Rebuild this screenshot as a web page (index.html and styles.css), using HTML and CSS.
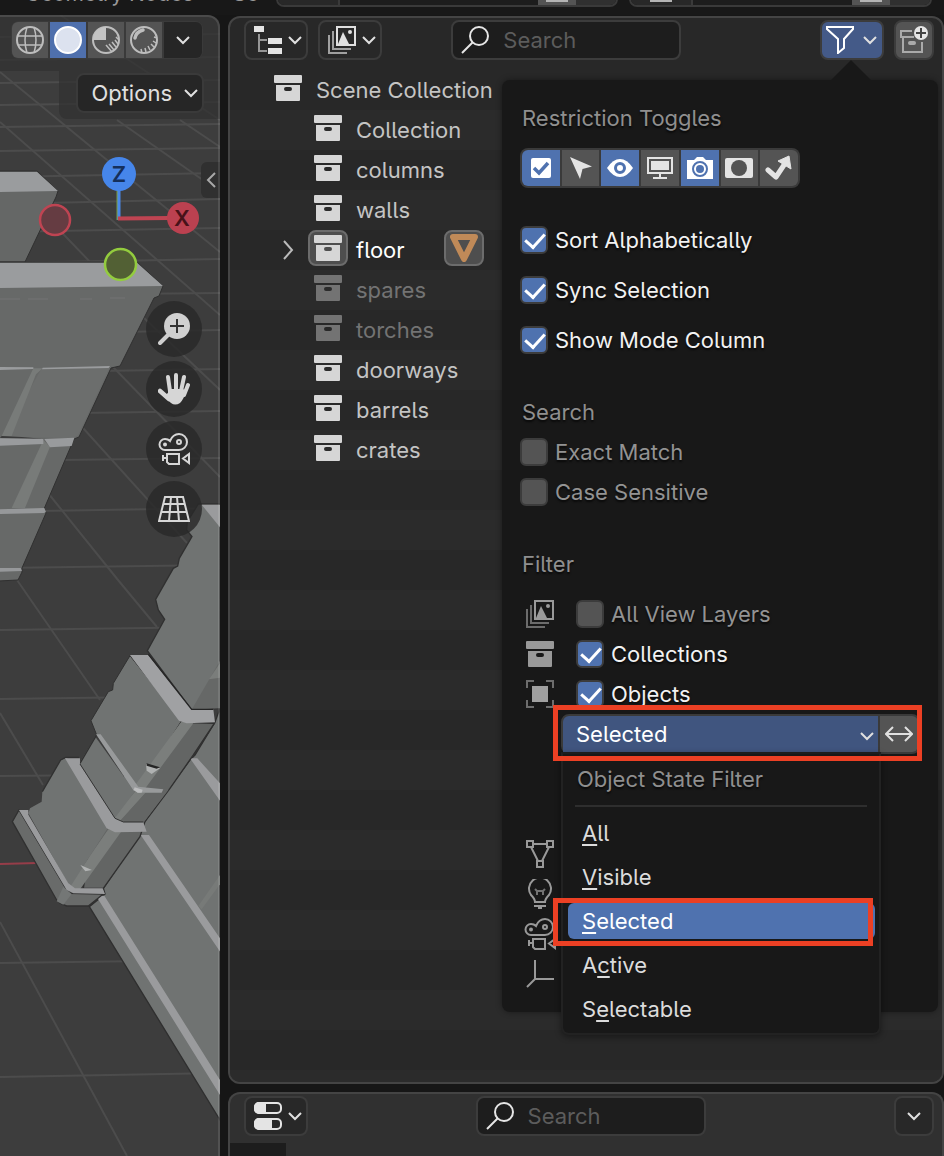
FILE: index.html
```html
<!DOCTYPE html>
<html lang="en">
<head>
<meta charset="utf-8">
<title>Outliner filter</title>
<link rel="stylesheet" href="styles.css">
</head>
<body>
<svg class="defs" aria-hidden="true">
  <symbol id="collection" viewBox="0 0 28 28">
    <path d="M1 1h26q1 0 1 1v6q0 1-1 1H1q-1 0-1-1V2q0-1 1-1zM2 11h24v15q0 1-1 1H3q-1 0-1-1zM12 13a2 2 0 0 0 0 4h4a2 2 0 0 0 0-4z" fill="currentColor" fill-rule="evenodd"/>
  </symbol>
  <symbol id="chevron" viewBox="0 0 14 10">
    <path d="M1 2l6 6 6-6" fill="none" stroke="currentColor" stroke-width="2"/>
  </symbol>
  <symbol id="search" viewBox="0 0 28 28">
    <g fill="none" stroke="currentColor" stroke-width="2"><circle cx="18" cy="10" r="9"/><path d="M11.500 16.500L1 27"/></g>
  </symbol>
  <symbol id="layers" viewBox="0 0 28 28">
    <g fill="none" stroke="currentColor"><rect x="9" y="1" width="18" height="18" stroke-width="2"/><path d="M5 5v18h18M1 9v18h18" stroke-width="2" opacity=".65"/></g>
    <path d="M10 18l5-12 6 12z" fill="currentColor"/><circle cx="22" cy="6" r="2" fill="currentColor"/>
  </symbol>
  <symbol id="camera" viewBox="0 0 32 32">
    <g fill="none" stroke="currentColor" stroke-width="2">
      <path d="M7 17a5.500 5.500 0 0 1 0-11q3 0 5 2q3-7 9-7a8 8 0 0 1 0 16z"/>
      <circle cx="7" cy="11.500" r="1"/><circle cx="21" cy="9" r="2"/>
      <path d="M9 21h12v10H11l-2-2zM9 25H5M5 22v6M31 21v9l-6-4.500z"/>
    </g>
  </symbol>
</svg>

<div class="app">
  <header class="topbar">
    <span class="tab">Geometry Nodes</span><span class="tab tab-next">Sc</span>
    <div class="id-field"><i class="id-icon"></i><i class="id-name"></i><i class="id-copy"></i><i class="id-close"></i></div>
    <div class="id-field id-second"><i class="id-icon"></i><i class="id-name"></i><i class="id-copy"></i><i class="id-close"></i></div>
  </header>

  <div class="workspace">
    <main class="viewport">
      <svg class="scene" viewBox="0 15 220 1141" preserveAspectRatio="xMinYMin slice" aria-hidden="true">
        <rect y="15" width="220" height="1141" fill="#3d3d3d"/>
        <g stroke="#4c4c4c" stroke-width="2" fill="none">
          <path d="M0 37L220 34M0 60L220 57M0 83L220 80M0 105L220 102M0 127L220 124M0 151L220 148M0 177L220 173M0 204L220 199M0 232L220 228M0 263L220 259M120 294L220 293M120 332L220 330M100 371L220 369M80 413L220 411M60 460L220 458M40 511L220 508M0 568L220 565M0 630L220 627M0 699L220 696M0 776L220 774M0 963L220 960M0 1077L220 1073"/>
          <path d="M60 15L220 120M0 72L107 160 220 252M117 120L220 192M180 120L220 147M0 122L220 315M43 213L143 317 220 390M113 367L220 477M83 428L187 543M48 493L118 580 157 627M17 580L100 700M0 713L43 785M0 922L127 1156"/>
        </g>
        <g stroke="#303030" stroke-width="1">
          <path d="M-2 171H37L58 191 56 197 25 262H-2z" fill="#656766"/>
          <path d="M-2 262H137L163 286 159 296 154 298 120 366 111 368 79 437 74 439 44 509 46 513 22 568 22 572 18 580-2 581z" fill="#676968"/>
        </g>
        <path d="M0 172H37L58 191 0 192zM0 263H137L163 286 0 288z" fill="#9a9c9e"/>
        <path d="M0 299H20M28 299H48M80 299H92M110 298H125" stroke="#7c7e7d" stroke-width=".6"/>
        <g transform="translate(0 280) scale(.3333)">
          <path d="M125 265L330 260 235 465 220 475 10 470z" fill="#6c6e6d"/>
          <path d="M100 265h28l-20 18L35 468H5z" fill="#787b79"/>
          <path d="M0 261l100 1v5L0 270zM128 263l202-5-4 6-200 4z" fill="#9a9c9e"/>
          <path d="M5 468l60 3 60 5-125-2z" fill="#3b3b3b"/>
          <path d="M130 480l20 20-75 184H35z" fill="#787b79"/>
          <path d="M0 475l130 2v15L0 497zM133 477l90-4-8 25-65 4z" fill="#999b9d"/>
          <path d="M0 688l133-4 5 12-6 3L0 702zM0 864h62l4 9-66 2z" fill="#96989a"/>
        </g>
        <g transform="translate(0 490) scale(.3333)">
          <path d="M0 1122L112 1119" stroke="#963d49" stroke-width="6"/>
          <path d="M660 655l-15 42-60 98-15 15-140 190-15 40-105 155 5 17-47 38 392 640z" fill="#707372" stroke="#2f2f2f" stroke-width="4"/>
          <path d="M570 805h22l68 75v52zM422 1035h25l213 310v40zM288 1217h25l347 553v45z" fill="#9a9b9d"/>
          <path d="M660 1155v28l-55 75-10-10z" fill="#777a78"/>
          <path d="M595 42h65v613l-85 5-133-178 52-94-19-28-8-32 53-93 13-7 5-23 38-65-16-20 2-25z" fill="#707372" stroke="#303030" stroke-width="4"/>
          <path d="M605 44h55v68z" fill="#9a9b9d"/>
          <path d="M660 512v143l-85 4z" fill="#666867"/><path d="M660 520v43l-33 5z" fill="#7a7d7b"/>
          <path d="M643 700l-63 95-70 100-75 100-15 45-110 155h-60l30-200 200-300z" fill="#636564" stroke="#303030" stroke-width="4"/>
          <path d="M390 497l155 195-130 205-10-5-115-157-17-43 52-87 13-5 2-20z" fill="#707372" stroke="#303030" stroke-width="3"/>
          <path d="M545 694l35 6-150 203-30-10zM405 905l32 3-75 85-25-10zM325 1018l38 8-125 175-33-10z" fill="#7b7e7c"/>
          <path d="M437 908h50l20-10-75 98h-75z" fill="#646665"/>
          <path d="M286 740l118 165-60 80-106-165z" fill="#707372"/>
          <path d="M180 812l20-10 125 210-115 180-125-222 5-15 35-20 2-30z" fill="#707372"/>
          <path d="M240 820l50-85M127 905l55-95 15-8h40" fill="none" stroke="#303030" stroke-width="4"/>
          <path d="M390 495h55l130 163h65l5 39-85 3-23-8z" fill="#a0a1a3"/>
          <path d="M445 493l130 165h65" fill="none" stroke="#252525" stroke-width="4"/>
          <path d="M288 733h14l113 157 75 8-5 10h-70l-14-6z" fill="#989a9b"/><path d="M404 892l24 7-3 9h-12l-12-9z" fill="#bbbcbd"/>
          <path d="M195 805h45v18l105 162 25 12h60l10 28-95 2-25-12z" fill="#9a9b9d"/>
          <path d="M240 822l105 163 25 11h60" fill="none" stroke="#333" stroke-width="3"/>
          <path d="M57 960l143 240 10 10 100 2-45 36h-65l-20-8-10-10L37 995z" fill="#696b6a" stroke="#303030" stroke-width="4"/>
          <path d="M190 1190l25 22-25 32-20-10z" fill="#747776"/>
          <path d="M57 960h28v14l120 206 20 15h83l7 17-95-2-20-10z" fill="#9a9b9d"/>
          <path d="M438 822l42 13-25 17-15-10zM241 1125l35 15-20 4z" fill="#b0b2b2"/>
          <path d="M440 820l40 12-10 4-30-9z" fill="#252525"/>
        </g>
      </svg>
      <div class="shade header-shade"></div>

      <div class="shading" role="group" aria-label="Viewport shading">
        <button aria-label="Wireframe"><svg viewBox="0 0 28 28" width="28" height="28" fill="none" stroke="#bdbdbd" stroke-width="2"><circle cx="14" cy="14" r="13"/><path d="M11 1q-4 13 0 26M18 1q4 13 0 26M1 10h26M2 19h24" stroke-width="1.500"/></svg></button>
        <button class="on" aria-label="Solid"><svg viewBox="0 0 28 28" width="28" height="28"><circle cx="14" cy="14" r="13" fill="#dce2ef" stroke="#fff" stroke-width="2"/></svg></button>
        <button aria-label="Material preview"><svg viewBox="0 0 28 28" width="28" height="28"><circle cx="14" cy="14" r="13" fill="none" stroke="#bdbdbd" stroke-width="2"/><path d="M14 14V1A13 13 0 0 0 1 14z" fill="#c4c4c4"/><path d="M14 19l6 7M17 18l5 6M20 16l4 5M23 14l3 4M24 11l3 3" stroke="#bdbdbd" stroke-width="1.500"/></svg></button>
        <button aria-label="Rendered"><svg viewBox="0 0 28 28" width="28" height="28" fill="none" stroke="#bdbdbd"><circle cx="14" cy="14" r="13" stroke-width="2"/><path d="M5 12q1-6 8-8" stroke-width="3.500" stroke-linecap="round"/><path d="M11 23l1 4M15 22l1 4M18 20l2 4M21 18l3 3M23 15l3 2M24 11l3 1" stroke-width="1.500"/></svg></button>
        <button class="drop" aria-label="Shading options"><svg width="14" height="10"><use href="#chevron"/></svg></button>
      </div>

      <button class="options">Options <svg width="14" height="10"><use href="#chevron"/></svg></button>

      <svg class="gizmo" viewBox="38 154 162 130" width="162" height="130" role="img" aria-label="View axes">
        <path d="M118 190v30" stroke="#7b9c3c" stroke-width="3"/>
        <path d="M119 190v30" stroke="#4a88e8" stroke-width="3"/>
        <path d="M118 218.500L170 218" stroke="#bf4452" stroke-width="4"/>
        <circle cx="119" cy="174" r="17" fill="#4686ea"/><circle cx="183" cy="218" r="16" fill="#bb4150"/>
        <circle cx="55" cy="220" r="15" fill="#653c42" stroke="#bf4452" stroke-width="2.500"/>
        <circle cx="120.500" cy="264.500" r="15.500" fill="#526034" stroke="#93cc3e" stroke-width="2.500"/>
        <text x="119" y="182" class="axis axis-z">Z</text><text x="182" y="226" class="axis axis-x">X</text>
      </svg>
      <button class="side-tab" aria-label="Show sidebar"><svg viewBox="0 0 12 18" width="12" height="18"><path d="M10 2L3 9l7 7" fill="none" stroke="#a8a8a8" stroke-width="2"/></svg></button>

      <div class="nav">
        <button aria-label="Zoom"><svg viewBox="0 0 32 32" width="32" height="32"><path d="M2 30L11 21" stroke="#d0d0d0" stroke-width="4" stroke-linecap="round"/><circle cx="19" cy="13" r="13" fill="#d0d0d0"/><path d="M12 13h14M19 6v14" stroke="#333" stroke-width="2"/></svg></button>
        <button aria-label="Pan"><svg viewBox="0 0 32 32" width="32" height="32"><g stroke="#d6d6d6" stroke-linecap="round" stroke-width="4" fill="none"><path d="M10 4l2 14M18 2v16M26 4l-3 14M30 12l-4 10"/><path d="M2 18l9 8" stroke-width="4.500"/></g><path d="M10 16h15l3 2q-2 8-6 12-5 3-9 0-4-3-6-8l3-2z" fill="#d6d6d6"/></svg></button>
        <button aria-label="Camera view"><svg width="32" height="32"><use href="#camera"/></svg></button>
        <button aria-label="Perspective"><svg viewBox="0 0 32 32" width="32" height="32" fill="none" stroke="#d6d6d6" stroke-width="2"><path d="M7 4h18l6 24H1zM5 11h22M3 19h26M13 4l-2 24M19 4l2 24"/></svg></button>
      </div>
    </main>

    <div class="editors">
      <section class="outliner" aria-label="Outliner">
        <div class="bar outliner-bar">
          <div class="group">
            <button class="btn pair" aria-label="Editor type"><svg viewBox="0 0 28 28" width="28" height="28"><path d="M5 8v17h8M5 14h8" fill="none" stroke="#969696" stroke-width="2"/><path d="M0 0h10v6H0zM14 12h14v6H14zM14 22h14v6H14z" fill="#e4e4e4"/></svg><svg width="14" height="10"><use href="#chevron"/></svg></button>
            <button class="btn pair" aria-label="Display mode"><svg width="28" height="28"><use href="#layers"/></svg><svg width="14" height="10"><use href="#chevron"/></svg></button>
          </div>
          <label class="search outliner-search"><svg width="28" height="28"><use href="#search"/></svg><input type="search" placeholder="Search" aria-label="Search outliner"></label>
          <div class="group right">
            <button class="btn pair filter" aria-label="Filter"><svg viewBox="0 0 28 28" width="28" height="28"><path d="M1 1h26v2l-9 10v9l-6 5V13L1 3z" fill="none" stroke="#fff" stroke-width="2"/></svg><svg width="14" height="10"><use href="#chevron"/></svg></button>
            <button class="btn new" aria-label="New collection"><svg viewBox="0 0 28 28" width="28" height="28"><path d="M12 5H1v6h13M3 11v15h19V16" fill="none" stroke="#aaa" stroke-width="2"/><rect x="8" y="15" width="8" height="4" rx="2" fill="#aaa"/><circle cx="21" cy="7" r="7" fill="#e6e6e6"/><path d="M16 7h10M21 2v10" stroke="#444" stroke-width="2"/></svg></button>
          </div>
        </div>

        <ul class="tree">
          <li class="root"><i></i><span class="ico"><svg width="28" height="28"><use href="#collection"/></svg></span><span>Scene Collection</span></li>
          <li><i></i><span class="ico"><svg width="28" height="28"><use href="#collection"/></svg></span><span>Collection</span></li>
          <li><i></i><span class="ico"><svg width="28" height="28"><use href="#collection"/></svg></span><span>columns</span></li>
          <li><i></i><span class="ico"><svg width="28" height="28"><use href="#collection"/></svg></span><span>walls</span></li>
          <li class="active"><i><svg viewBox="0 0 12 20" width="12" height="20"><path d="M2 1l8 9-8 9" fill="none" stroke="#bbb" stroke-width="2"/></svg></i><span class="ico boxed"><svg width="28" height="28"><use href="#collection"/></svg></span><span>floor</span><span class="boxed mesh"><svg viewBox="0 0 28 28" width="28" height="28"><path d="M3 3h22L14 25z" fill="none" stroke="#c08a58" stroke-width="6" stroke-linejoin="round"/></svg></span></li>
          <li class="off"><i></i><span class="ico"><svg width="28" height="28"><use href="#collection"/></svg></span><span>spares</span></li>
          <li class="off"><i></i><span class="ico"><svg width="28" height="28"><use href="#collection"/></svg></span><span>torches</span></li>
          <li><i></i><span class="ico"><svg width="28" height="28"><use href="#collection"/></svg></span><span>doorways</span></li>
          <li><i></i><span class="ico"><svg width="28" height="28"><use href="#collection"/></svg></span><span>barrels</span></li>
          <li><i></i><span class="ico"><svg width="28" height="28"><use href="#collection"/></svg></span><span>crates</span></li>
        </ul>

        <div class="popover" role="dialog" aria-label="Filter">
          <h2>Restriction Toggles</h2>
          <div class="toggles">
            <button class="on" aria-label="Exclude"><svg viewBox="0 0 28 28" width="28" height="28"><rect x="4" y="4" width="20" height="20" rx="2" fill="#fff"/><path d="M7 14l5 5L21 9" fill="none" stroke="#4f72af" stroke-width="3.500"/></svg></button>
            <button aria-label="Selectable"><svg viewBox="0 0 28 28" width="28" height="28"><path d="M3 3l22 9.500-9.500 2.500L13 25z" fill="#e4e4e4"/></svg></button>
            <button class="on" aria-label="Hide"><svg viewBox="0 0 28 28" width="28" height="28"><path d="M1 14Q7 5 14 5t13 9Q21 23 14 23T1 14z" fill="#fff"/><circle cx="14" cy="14" r="4.500" fill="none" stroke="#4f72af" stroke-width="3"/></svg></button>
            <button aria-label="Viewports"><svg viewBox="0 0 28 28" width="28" height="28"><path d="M2 4h24v15H2z" fill="none" stroke="#e4e4e4" stroke-width="2"/><path d="M5 7h18v9H5zM13 19h2v4h-2zM7 23h14v2H7z" fill="#e4e4e4"/></svg></button>
            <button class="on" aria-label="Renders"><svg viewBox="0 0 28 28" width="28" height="28"><path d="M1 6h7l3-3h6l3 3h7v19H1z" fill="#fff"/><circle cx="14" cy="15" r="7" fill="none" stroke="#4f72af" stroke-width="2"/><circle cx="14" cy="15" r="4" fill="#4f72af"/></svg></button>
            <button aria-label="Holdout"><svg viewBox="0 0 28 28" width="28" height="28"><rect y="4" width="28" height="20" rx="2" fill="#e4e4e4"/><circle cx="14" cy="14" r="8" fill="#545454"/></svg></button>
            <button aria-label="Indirect only"><svg viewBox="0 0 28 28" width="28" height="28" fill="none" stroke="#e4e4e4" stroke-width="5" stroke-linejoin="round"><path d="M3 16l8 7L21 8" stroke-linecap="round"/><path d="M13 7l11-5 2 13z" fill="#e4e4e4" stroke-width="1"/></svg></button>
          </div>
          <div class="checks spaced">
            <label><input type="checkbox" checked>Sort Alphabetically</label>
            <label><input type="checkbox" checked>Sync Selection</label>
            <label><input type="checkbox" checked>Show Mode Column</label>
          </div>
          <h2>Search</h2>
          <div class="checks">
            <label class="dim"><input type="checkbox">Exact Match</label>
            <label class="dim"><input type="checkbox">Case Sensitive</label>
          </div>
          <h2>Filter</h2>
          <div class="filters">
            <svg width="28" height="28"><use href="#layers"/></svg><label class="dim"><input type="checkbox">All View Layers</label>
            <svg width="28" height="28"><use href="#collection"/></svg><label><input type="checkbox" checked>Collections</label>
            <svg viewBox="0 0 28 28" width="28" height="28"><path d="M1 8V1h7M20 1h7v7M27 20v7h-7M8 27H1v-7" fill="none" stroke="#6d6d6d" stroke-width="2"/><path d="M6 6h16v16H6z" fill="#a0a0a0"/></svg><label><input type="checkbox" checked>Objects</label>
          </div>
          <div class="state">
            <div class="state-row">
              <select aria-label="Object State Filter"><option>All</option><option>Visible</option><option selected>Selected</option><option>Active</option><option>Selectable</option></select>
              <svg class="select-arrow" width="14" height="10"><use href="#chevron"/></svg>
              <button class="invert" aria-label="Invert"><svg viewBox="0 0 28 28" width="28" height="28"><path d="M1 14h26M8 7l-7 7 7 7M20 7l7 7-7 7" fill="none" stroke="#e0e0e0" stroke-width="2"/></svg></button>
            </div>
            <div class="menu" role="menu">
              <h3>Object State Filter</h3>
              <button role="menuitem"><span><u>A</u>ll</span></button>
              <button role="menuitem"><span><u>V</u>isible</span></button>
              <button role="menuitem" class="current"><span><u>S</u>elected</span></button>
              <button role="menuitem"><span>A<u>c</u>tive</span></button>
              <button role="menuitem"><span>S<u>e</u>lectable</span></button>
            </div>
            <div class="mark"></div>
          </div>
          <div class="types">
            <svg viewBox="0 0 28 28" width="28" height="28" fill="none" stroke="currentColor" stroke-width="2"><path d="M1 1h6v6H1zM21 1h6v6h-6zM11 21h6v6h-6zM7 4h14M5 7l7 14M23 7l-7 14"/></svg>
            <svg viewBox="0 0 28 30" width="28" height="30" fill="none" stroke="currentColor" stroke-width="2"><path d="M9 23q0-3-4-7a11 11 0 1 1 18 0q-4 4-4 7zM8 27h12M12 29h4"/><path d="M9 10l2 2h6l2-2M11 12v4M17 12v4" opacity=".7"/></svg>
            <svg width="32" height="32"><use href="#camera"/></svg>
            <svg viewBox="0 0 28 28" width="28" height="28" fill="none" stroke="currentColor" stroke-width="2"><path d="M9 0v19h19M9 19l-8 8"/></svg>
          </div>
        </div>
      </section>

      <section class="properties" aria-label="Properties">
        <div class="bar properties-bar">
          <button class="btn pair" aria-label="Editor type"><svg viewBox="0 0 28 28" width="28" height="28"><rect x="1" y="1" width="26" height="10" rx="4" fill="none" stroke="#e4e4e4" stroke-width="2"/><path d="M5 0h7v12H5a5 5 0 0 1-5-5V5a5 5 0 0 1 5-5zM5 16h13v12H5a5 5 0 0 1-5-5v-2a5 5 0 0 1 5-5z" fill="#e4e4e4"/><rect x="1" y="17" width="26" height="10" rx="4" fill="none" stroke="#e4e4e4" stroke-width="2"/></svg><svg width="14" height="10"><use href="#chevron"/></svg></button>
          <label class="search properties-search"><svg width="28" height="28"><use href="#search"/></svg><input type="search" placeholder="Search" aria-label="Search properties"></label>
          <button class="btn right square" aria-label="Options"><svg width="14" height="10"><use href="#chevron"/></svg></button>
        </div>
        <div class="prop-tabs"></div>
      </section>
    </div>
  </div>
</div>
</body>
</html>
```

FILE: styles.css
```css
* { box-sizing: border-box; }
body {
  margin: 0;
  background: #161616;
  color: #c4c4c4;
  font: 22px/40px Inter, "Noto Sans", sans-serif;
  font-feature-settings: "cv05" 1;
}
button, input, select { font: inherit; color: inherit; font-feature-settings: inherit; }
button {
  display: flex;
  align-items: center;
  justify-content: center;
  margin: 0;
  padding: 0;
  border: 0;
  background: none;
  color: #e0e0e0;
}
svg { display: block; flex: none; }
h2, h3 { margin: 0; font-size: 22px; font-weight: 400; color: #8f8f8f; }
.defs { position: absolute; width: 0; height: 0; }

.app { display: flex; flex-direction: column; height: 100vh; overflow: hidden; }

.topbar {
  display: flex;
  flex: none;
  align-items: flex-end;
  height: 15px;
  padding: 0 12px 8px 25px;
  overflow: hidden;
  background: #181818;
}
.tab { flex: none; width: 208px; font-size: 21px; line-height: 26px; color: #999; }
.tab-next { width: 43px; }
.id-field {
  display: flex;
  flex: 342;
  height: 40px;
  border: 2px solid #3a3a3a;
  border-radius: 8px;
  background: #1d1d1d;
  overflow: hidden;
}
.id-second { flex: 303; margin-left: 11px; }
.id-icon, .id-copy { display: flex; align-items: flex-end; justify-content: center; padding-bottom: 3px; }
.id-icon { width: 62px; border-right: 2px solid #3a3a3a; background: #282828; }
.id-name { flex: 1; }
.id-copy { width: 38px; background: #545454; }
.id-copy::after, .id-second .id-icon::after { content: ""; width: 22px; height: 18px; background: #b4b4b4; }
.id-close { width: 40px; background: #303030; }

.workspace { display: grid; flex: 1; grid-template-columns: 220px minmax(0, 1fr); gap: 8px; min-height: 0; }

.viewport {
  position: relative;
  display: flex;
  flex-direction: column;
  align-items: flex-end;
  padding: 6px 16px 0 0;
  border-radius: 0 12px 0 0;
  overflow: hidden;
}
.viewport > * { position: relative; flex: none; }
.viewport > .scene { position: absolute; inset: 0; width: 100%; height: 100%; }
.viewport::after {
  content: "";
  position: absolute;
  inset: 0 0 -4px -4px;
  border: 2px solid #ffffff1c;
  border-radius: 0 12px 0 0;
  pointer-events: none;
}
.viewport > .header-shade { position: absolute; inset: 0 0 auto 0; height: 56px; background: #303030b8; }
.header-shade::after {
  content: "";
  position: absolute;
  top: 56px;
  right: 0;
  width: 161px;
  height: 48px;
  border-radius: 0 0 0 8px;
  background: #303030b8;
}
.shading {
  display: flex;
  gap: 2px;
  margin-right: 1px;
  padding: 1px;
  border-radius: 8px;
  background: #3a3a3a;
}
.shading button { width: 36px; height: 36px; background: #545454; }
.shading button:first-child { border-radius: 6px 0 0 6px; }
.shading .on { background: #4f70ad; }
.shading .drop { width: 38px; border-radius: 0 6px 6px 0; background: #262626; }
.options {
  gap: 12px;
  height: 40px;
  margin-top: 14px;
  padding: 0 4px 0 13px;
  border: 2px solid #3a3a3a;
  border-radius: 8px;
  background: #262626;
}
.gizmo { margin: 41px 4px 0 0; }
.axis { font-size: 22px; font-weight: 600; text-anchor: middle; }
.axis-z { fill: #15305c; }
.axis-x { fill: #481219; }
.viewport > .side-tab {
  position: absolute;
  top: 147px;
  right: 0;
  width: 19px;
  height: 36px;
  border-radius: 6px 0 0 6px;
  background: #303030;
}
.nav { display: flex; flex-direction: column; gap: 4px; margin: 17px 2px 0 0; }
.nav button { width: 56px; height: 56px; border-radius: 50%; background: #282828d0; color: #d6d6d6; }

.editors { display: flex; flex-direction: column; gap: 8px; min-width: 0; padding-top: 1px; }
.outliner, .properties {
  position: relative;
  border: 2px solid #444;
  border-radius: 12px;
  background: #282828;
}
.outliner { display: flex; flex: 1; flex-direction: column; }
.properties { flex: none; height: 64px; border-bottom: 0; border-radius: 12px 12px 0 0; background: #303030; }

.bar { display: grid; align-items: center; padding: 2px 8px 0 14px; }
.outliner-bar { grid-template-columns: auto 1fr 230px 2fr auto; padding-bottom: 10px; }
.properties-bar { grid-template-columns: auto 8fr 230px 9fr auto; padding-bottom: 7px; }
.prop-tabs { width: 56px; height: 13px; background: #1d1d1d; }
.outliner-search, .properties-search { grid-column: 3; }
.right { grid-column: 5; }
.group { display: flex; gap: 10px; }
.btn {
  height: 40px;
  border: 2px solid #3c3c3c;
  border-radius: 8px;
  background: #282828;
}
.pair { gap: 6px; width: 64px; padding-left: 4px; }
.square, .new { width: 40px; }
.new { background: #545454; }
.filter { gap: 9px; padding-left: 0; padding-right: 2px; background: #445a88; }
.search {
  display: flex;
  align-items: center;
  gap: 14px;
  height: 40px;
  padding: 0 8px;
  border: 2px solid #3c3c3c;
  border-radius: 8px;
  background: #1d1d1d;
  color: #e6e6e6;
}
.search input { flex: 1; min-width: 0; height: 36px; padding: 0; border: 0; outline: 0; background: none; appearance: none; }
.search input::placeholder { color: #5c5c5c; opacity: 1; }

.tree {
  flex: 1;
  margin: 0;
  padding: 0;
  border-radius: 0 0 10px 10px;
  list-style: none;
  background: repeating-linear-gradient(#282828 0 40px, #2b2b2b 40px 80px);
}
.tree li { display: flex; align-items: center; height: 40px; padding-left: 38px; }
.tree .root { padding-left: 0; margin-left: -2px; }
.tree i { display: flex; justify-content: center; width: 40px; }
.ico { display: flex; justify-content: center; align-items: center; align-self: flex-start; width: 40px; height: 36px; margin-right: 8px; color: #d6d6d6; }
.boxed { border: 2px solid #6c6c6c; border-radius: 8px; background: #4e4e4e; }
.mesh { display: flex; justify-content: center; align-items: center; align-self: flex-start; width: 40px; height: 36px; margin-left: 39px; }
.active { color: #fff; }
.off, .off .ico { color: #737373; }

.popover {
  position: absolute;
  top: 62px;
  right: 4px;
  width: 436px;
  padding: 18px 18px 18px 20px;
  border-radius: 8px;
  background: #181818;
  box-shadow: 0 0 6px #0006;
  text-shadow: 0 2px 2px #000a;
}
.popover::before {
  content: "";
  position: absolute;
  top: -20px;
  right: 67px;
  border: 20px solid transparent;
  border-top: 0;
  border-bottom-color: #181818;
}
.toggles {
  display: flex;
  gap: 2px;
  width: 280px;
  height: 40px;
  margin: 10px 0 32px -2px;
  padding: 2px;
  border-radius: 8px;
  background: #3a3a3a;
}
.toggles button { flex: 1; background: #545454; }
.toggles .on { background: #4f72af; }
.toggles button:first-child { border-radius: 6px 0 0 6px; }
.toggles button:last-child { border-radius: 0 6px 6px 0; }
.checks { display: flex; flex-direction: column; margin: 0 0 32px -2px; }
.spaced { gap: 10px; }
.popover label { display: flex; align-items: center; gap: 7px; color: #f2f2f2; }
.popover label.dim { color: #939393; }
input[type="checkbox"] {
  flex: none;
  width: 28px;
  height: 28px;
  margin: 0;
  border: 2px solid #3c3c3c;
  border-radius: 6px;
  background: #545454;
  appearance: none;
}
input[type="checkbox"]:checked { background: #4f72af; }
input[type="checkbox"]:checked::after {
  content: "";
  display: block;
  width: 9px;
  height: 16px;
  margin: 1px 0 0 7px;
  border: solid #fff;
  border-width: 0 3px 3px 0;
  transform: rotate(42deg);
}
.filters {
  display: grid;
  grid-template-columns: 28px 1fr;
  align-items: center;
  column-gap: 22px;
  margin: 10px 0 0 4px;
  color: #999;
}
.state { position: relative; margin-left: 39px; }
.state-row { position: relative; display: flex; height: 40px; border: 2px solid #3a3a3a; border-radius: 8px; background: #3a3a3a; gap: 2px; }
.state select {
  flex: 1;
  height: 36px;
  padding: 0 13px;
  border: 0;
  border-radius: 6px 0 0 0;
  outline: 0;
  background: #40557f;
  color: #fff;
  line-height: 36px;
  appearance: none;
}
.select-arrow { position: absolute; top: 15px; right: 44px; color: #e0e0e0; }
.invert { width: 38px; border-radius: 0 6px 6px 0; background: #545454; }
.menu {
  position: absolute;
  top: 38px;
  left: 0;
  right: 39px;
  padding: 5px 4px 2px 5px;
  border: 2px solid #222;
  border-top-color: #1d1d1d;
  border-radius: 0 0 8px 8px;
  background: #181818;
  box-shadow: 0 2px 6px #0006;
}
.menu h3 { margin: 0 8px 8px 7px; padding: 0 2px 6px; border-bottom: 2px solid #2e2e2e; }
.menu button {
  position: relative;
  justify-content: flex-start;
  width: 100%;
  height: 36px;
  margin-bottom: 8px;
  padding-left: 14px;
  border-radius: 6px;
  color: #dcdcdc;
}
.menu button:last-child { margin-bottom: 4px; }
.menu .current { background: #4f72af; color: #fff; }
.current::after, .mark { content: ""; position: absolute; border: 5px solid #ec4024; pointer-events: none; }
.current::after { inset: -5px 2px -7px -15px; }
.mark { inset: -9px -2px -7px -8px; }
u { text-decoration-thickness: 2px; text-underline-offset: 3px; text-decoration-skip-ink: none; }
.types {
  display: grid;
  grid-auto-rows: 40px;
  place-items: center;
  width: 36px;
  margin-top: 80px;
  color: #999;
}
```
